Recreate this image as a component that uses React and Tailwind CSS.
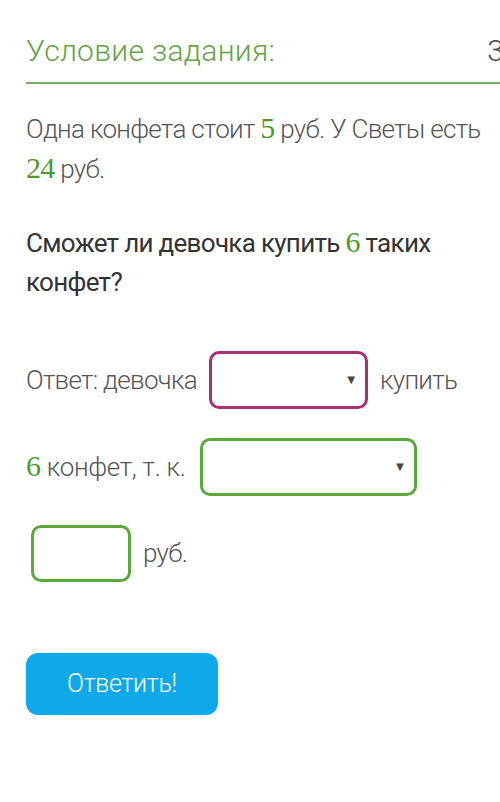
import React from 'react';

const Num = ({ children }) => (
  <span className="text-[30px] leading-none text-[#4b9b2c] font-['Liberation_Serif',serif]">{children}</span>
);

const Select = ({ border, width, arrowRight }) => (
  <div className={`relative h-[58px] rounded-[10px] border-[3px] bg-white ${border} ${width}`}>
    <span className={`absolute top-1/2 -translate-y-1/2 text-[13px] text-[#444] ${arrowRight}`}>▼</span>
  </div>
);

export default function App() {
  return (
    <div className="w-[500px] h-[802px] bg-white overflow-hidden font-['Roboto',sans-serif] text-[#555]">
      {/* Header */}
      <div className="pl-[26px] pt-[28px]">
        <div className="flex items-end justify-between overflow-hidden h-[46px]">
          <span className="text-[30px] font-light text-[#62a446] leading-[46px] tracking-[0.3px]">Условие задания:</span>
          <span className="text-[30px] font-light text-[#444] leading-[46px] mr-[-4px]">3</span>
        </div>
        <div className="h-[2px] bg-[#78ae5e] mt-[8px]"></div>
      </div>

      {/* Task */}
      <div className="pl-[26px] pr-[10px]">
        <p className="mt-[25px] text-[26px] leading-[40px] font-light tracking-[-0.7px] pr-[8px]">
          Одна конфета стоит <Num>5</Num> руб. У Светы есть <Num>24</Num> руб.
        </p>
        <p className="mt-[35px] text-[26px] leading-[39px] font-normal text-[#333] tracking-[-0.7px] pr-[40px]">
          Сможет ли девочка купить <Num>6</Num> таких конфет?
        </p>
      </div>

      {/* Answer */}
      <div className="pl-[26px] text-[26px] font-light tracking-[-0.7px]">
        <div className="mt-[49px] flex items-center">
          <span>Ответ: девочка</span>
          <div className="ml-[12px]">
            <Select border="border-[#a8306e]" width="w-[159px]" arrowRight="right-[8px]" />
          </div>
          <span className="ml-[12px]">купить</span>
        </div>
        <div className="mt-[29px] flex items-center">
          <span className="tracking-[-0.3px]"><Num>6</Num> конфет, т. к.</span>
          <div className="ml-[14px]">
            <Select border="border-[#5aa83a]" width="w-[217px]" arrowRight="right-[8px]" />
          </div>
        </div>
        <div className="mt-[29px] flex items-center pl-[5px]">
          <div className="w-[100px] h-[57px] rounded-[10px] border-[3px] border-[#5aa83a] bg-white"></div>
          <span className="ml-[12px]">руб.</span>
        </div>
        <button className="mt-[71px] w-[192px] h-[62px] rounded-[12px] bg-[#0fa9e9] text-white text-[25px] font-light tracking-[-0.3px]">
          Ответить!
        </button>
      </div>
    </div>
  );
}
